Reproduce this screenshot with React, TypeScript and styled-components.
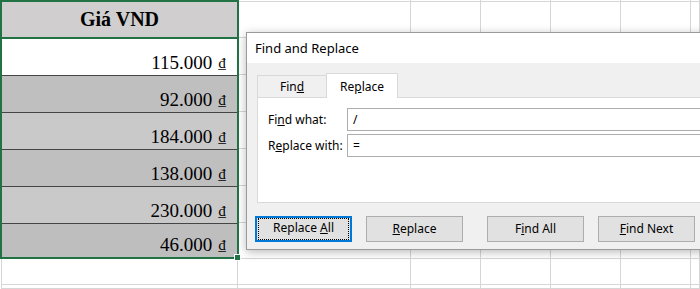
import styled, { createGlobalStyle, css } from "styled-components";

const GlobalStyle = createGlobalStyle`
  html, body {
    margin: 0;
    padding: 0;
    background: #ffffff;
    overflow: hidden;
  }
  #root {
    width: 700px;
    height: 289px;
  }
`;

const prices = ["115.000", "92.000", "184.000", "138.000", "230.000", "46.000"];
const rowColors = ["#ffffff", "#bfbfbf", "#c9c9c9", "#bfbfbf", "#c9c9c9", "#bebebe"];

// columns to the right of the selected column (row 0 is the cropped strip at the top)
const rowHeights = [2, 36, 37, 37, 37, 37, 37, 36, 26, 4];
const otherColumns = 6;

// Underlines the access-key letter in a dialog label
function Key({ children }: { children: string }) {
  return <u>{children}</u>;
}

function App() {
  return (
    <Page>
      <GlobalStyle />
      <Sheet>
        <Selected>
          <HeaderCell>Giá VND</HeaderCell>
          {prices.map((p, i) => (
            <ValueCell key={p} $bg={rowColors[i]} $last={i === prices.length - 1}>
              <Amount>{p}</Amount>
              <Dong>₫</Dong>
            </ValueCell>
          ))}
          <Handle />
        </Selected>
        {rowHeights.map((h, r) =>
          Array.from({ length: otherColumns }).map((_, c) => (
            <GridCell
              key={`${r}-${c}`}
              style={{ gridRow: r + 1, gridColumn: c + 2 }}
            />
          ))
        )}
        {rowHeights.slice(8).map((_, r) => (
          <GridCell key={`a-${r}`} style={{ gridRow: r + 9, gridColumn: 1 }} $first />
        ))}
      </Sheet>

      <Dialog>
        <TitleBar>Find and Replace</TitleBar>
        <DialogBody>
          <Tabs>
            <Tab>
              Fin<Key>d</Key>
            </Tab>
            <Tab $active>
              Re<Key>p</Key>lace
            </Tab>
          </Tabs>
          <Panel>
            <FieldRow>
              <FieldLabel>
                Fi<Key>n</Key>d what:
              </FieldLabel>
              <FieldInput defaultValue="/" />
            </FieldRow>
            <FieldRow>
              <FieldLabel>
                R<Key>e</Key>place with:
              </FieldLabel>
              <FieldInput defaultValue="=" />
            </FieldRow>
          </Panel>
          <ButtonRow>
            <ButtonGroup>
              <DialogButton $focused>
                <FocusRing>
                  Replace <Key>A</Key>ll
                </FocusRing>
              </DialogButton>
              <DialogButton>
                <Key>R</Key>eplace
              </DialogButton>
            </ButtonGroup>
            <ButtonGroup>
              <DialogButton>
                F<Key>i</Key>nd All
              </DialogButton>
              <DialogButton>
                <Key>F</Key>ind Next
              </DialogButton>
            </ButtonGroup>
          </ButtonRow>
        </DialogBody>
      </Dialog>
    </Page>
  );
}

const Page = styled.div`
  position: relative;
  width: 700px;
  height: 289px;
  overflow: hidden;
`;

const Sheet = styled.div`
  display: grid;
  grid-template-columns: 238px 173px repeat(4, 70px) 1fr;
  grid-template-rows: ${rowHeights.map((h) => `${h}px`).join(" ")};
  width: 700px;
`;

const GridCell = styled.div<{ $first?: boolean }>`
  box-sizing: border-box;
  border-right: 1px solid #d6d6d6;
  border-bottom: 1px solid #d6d6d6;
  ${({ $first }) =>
    $first &&
    css`
      border-left: 1px solid #d6d6d6;
      margin-left: 1px;
    `}
`;

const Selected = styled.div`
  position: relative;
  grid-column: 1;
  grid-row: 1 / 9;
  display: flex;
  flex-direction: column;
  box-sizing: border-box;
  width: 239px;
  border: 2px solid #217346;
  font-family: "Liberation Serif", "Times New Roman", serif;
  color: #000000;
`;

const HeaderCell = styled.div`
  height: 35px;
  flex: none;
  display: flex;
  align-items: center;
  justify-content: center;
  background: #d0cece;
  border-bottom: 2px solid #217346;
  font-size: 20px;
  font-weight: bold;
`;

const ValueCell = styled.div<{ $bg: string; $last?: boolean }>`
  display: flex;
  flex: none;
  align-items: flex-end;
  justify-content: flex-end;
  gap: 6px;
  height: 37px;
  padding: 0 11px 1px 0;
  box-sizing: border-box;
  background: ${({ $bg }) => $bg};
  border-bottom: 1px solid #454545;
  ${({ $last }) =>
    $last &&
    css`
      flex: 1;
      border-bottom: none;
    `}
`;

const Amount = styled.span`
  font-size: 19px;
  line-height: 22px;
`;

const Dong = styled.span`
  font-size: 15px;
  line-height: 22px;
`;

const Handle = styled.div`
  position: absolute;
  right: -4px;
  bottom: -4px;
  width: 5px;
  height: 5px;
  background: #217346;
  border: 1px solid #ffffff;
`;

const Dialog = styled.div`
  position: absolute;
  left: 246px;
  top: 32px;
  width: 480px;
  height: 218px;
  box-sizing: border-box;
  display: flex;
  flex-direction: column;
  background: #f0f0f0;
  border: 1px solid #9a9a9a;
  box-shadow: 0 2px 9px rgba(0, 0, 0, 0.28);
  font-family: "Noto Sans", "Segoe UI", sans-serif;
  color: #000000;
`;

const TitleBar = styled.div`
  height: 30px;
  display: flex;
  align-items: center;
  padding-left: 8px;
  background: #ffffff;
  font-size: 13px;
`;

const DialogBody = styled.div`
  display: flex;
  flex-direction: column;
  padding: 10px 0 0 9px;
`;

const Tabs = styled.div`
  display: flex;
  align-items: flex-end;
  height: 24px;
  margin-left: 1px;
`;

const Tab = styled.div<{ $active?: boolean }>`
  display: flex;
  align-items: center;
  justify-content: center;
  box-sizing: border-box;
  font-size: 12px;
  border: 1px solid #d9d9d9;
  border-bottom: none;
  ${({ $active }) =>
    $active
      ? css`
          width: 72px;
          height: 25px;
          margin-bottom: -1px;
          background: #ffffff;
          position: relative;
        `
      : css`
          width: 69px;
          height: 22px;
          background: #f0f0f0;
          border-right: none;
        `}
`;

const Panel = styled.div`
  display: flex;
  flex-direction: column;
  gap: 3px;
  height: 106px;
  box-sizing: border-box;
  margin-left: 1px;
  padding: 10px 0 0 10px;
  background: #ffffff;
  border: 1px solid #d9d9d9;
`;

const FieldRow = styled.div`
  display: flex;
  align-items: center;
`;

const FieldLabel = styled.span`
  width: 79px;
  font-size: 12px;
`;

const FieldInput = styled.input`
  flex: 1;
  height: 23px;
  box-sizing: border-box;
  padding: 0 0 0 5px;
  border: 1px solid #adadad;
  font-family: "Noto Sans", "Segoe UI", sans-serif;
  font-size: 12px;
  color: #000000;
  outline: none;
`;

const ButtonRow = styled.div`
  display: flex;
  gap: 24px;
  margin: 13px 0 0 -1px;
`;

const ButtonGroup = styled.div`
  display: flex;
  gap: 14px;
`;

const DialogButton = styled.button<{ $focused?: boolean }>`
  width: 97px;
  height: 26px;
  box-sizing: border-box;
  display: block;
  padding: 0;
  background: #e1e1e1;
  border: 1px solid #adadad;
  font-family: "Noto Sans", "Segoe UI", sans-serif;
  font-size: 12px;
  line-height: 22px;
  text-align: center;
  color: #000000;
  ${({ $focused }) =>
    $focused &&
    css`
      border: 2px solid #0078d7;
    `}
`;

const FocusRing = styled.span`
  display: block;
  margin: 0 1px;
  height: 20px;
  line-height: 18px;
  border: 1px dotted #000000;
`;

export default App;
